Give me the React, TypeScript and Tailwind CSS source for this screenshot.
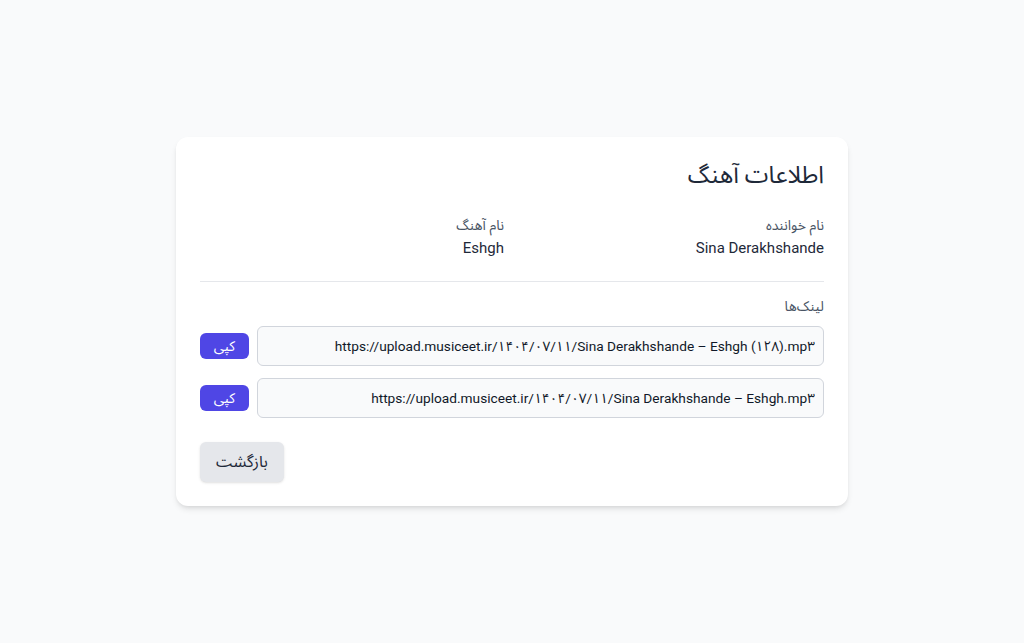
const links = [
  'https://upload.musiceet.ir/۱۴۰۴/۰۷/۱۱/Sina Derakhshande – Eshgh (۱۲۸).mp۳',
  'https://upload.musiceet.ir/۱۴۰۴/۰۷/۱۱/Sina Derakhshande – Eshgh.mp۳',
];

export default function App() {
  return (
    <div
      dir="rtl"
      className="min-h-[643px] bg-gray-50 flex items-center justify-center"
      style={{ fontFamily: 'Roboto, "Noto Sans Arabic", "DejaVu Sans", sans-serif' }}
    >
      <div className="w-[672px] bg-white rounded-xl shadow-md p-6">
        <h1 className="text-2xl leading-7 font-normal text-gray-800 mb-[26px]">اطلاعات آهنگ</h1>

        <div className="grid grid-cols-2 gap-4 mb-[22px]">
          <div>
            <div className="text-sm text-gray-600">نام خواننده</div>
            <div className="text-[15px] text-gray-800 mt-0.5">Sina Derakhshande</div>
          </div>
          <div>
            <div className="text-sm text-gray-600">نام آهنگ</div>
            <div className="text-[15px] text-gray-800 mt-0.5">Eshgh</div>
          </div>
        </div>

        <div className="border-t border-gray-200 pt-[14px]">
          <div className="text-sm text-gray-600 mb-2.5">لینک‌ها</div>
          <div className="flex flex-col gap-3">
            {links.map((link) => (
              <div key={link} className="flex items-center gap-2">
                <input
                  readOnly
                  value={link}
                  className="flex-1 h-10 px-2 bg-gray-50 border border-gray-300 rounded-md text-[13.7px] text-gray-900 outline-none"
                />
                <button className="w-[49px] h-[26px] bg-[#4f46e5] text-white text-sm rounded-md">
                  کپی
                </button>
              </div>
            ))}
          </div>
        </div>

        <div className="flex justify-end mt-6">
          <button className="h-10 px-4 bg-gray-200 text-gray-800 rounded-md shadow-sm">
            بازگشت
          </button>
        </div>
      </div>
    </div>
  );
}
